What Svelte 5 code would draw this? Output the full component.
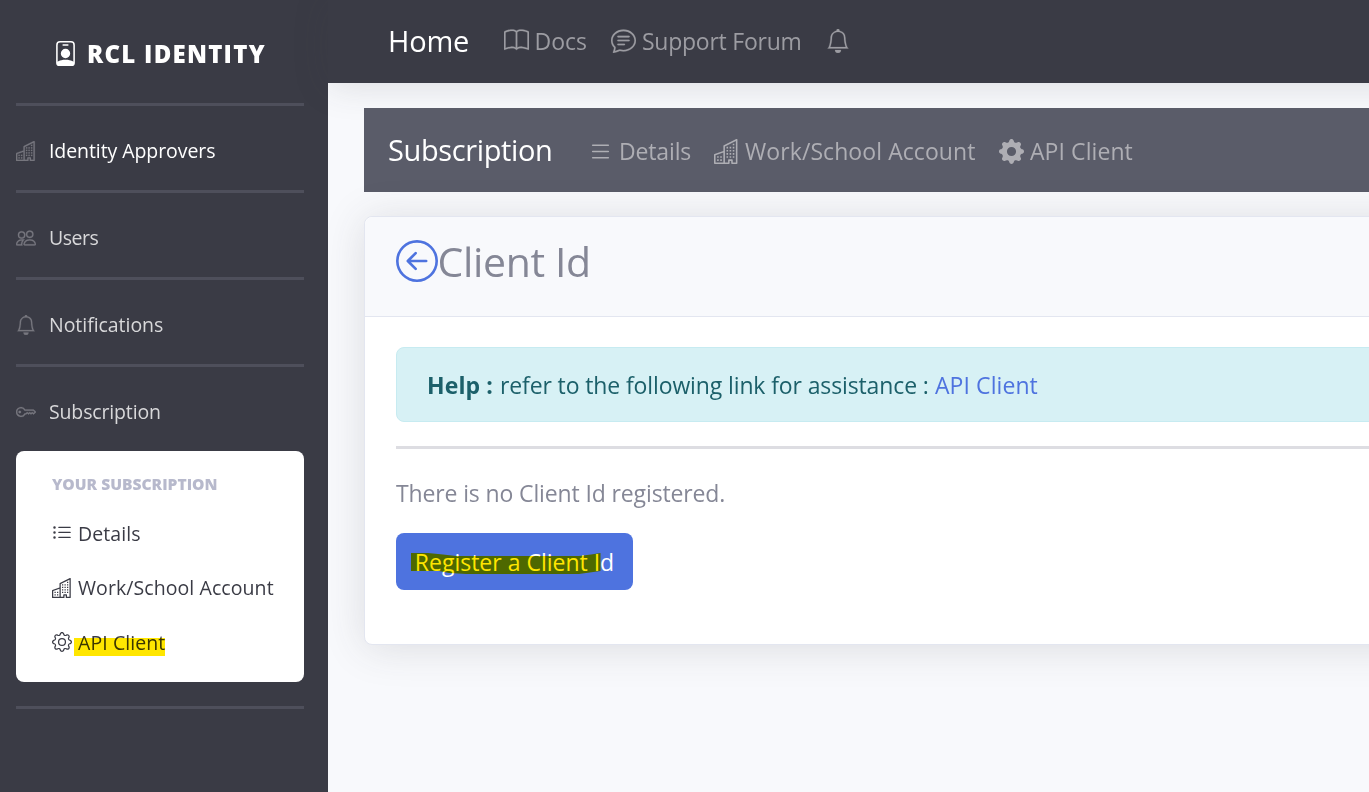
<script>
  const icons = {
    building: 'M14.763.075A.5.5 0 0 1 15 .5v15a.5.5 0 0 1-.5.5h-3a.5.5 0 0 1-.5-.5V14h-1v1.5a.5.5 0 0 1-.5.5h-9a.5.5 0 0 1-.5-.5V10a.5.5 0 0 1 .342-.474L6 7.64V4.5a.5.5 0 0 1 .276-.447l8-4a.5.5 0 0 1 .487.022zM6 8.694 1 10.36V15h5V8.694zM7 15h2v-1.5a.5.5 0 0 1 .5-.5h2a.5.5 0 0 1 .5.5V15h2V1.309l-7 3.5V15zM2 11h1v1H2v-1zm2 0h1v1H4v-1zm-2 2h1v1H2v-1zm2 0h1v1H4v-1zm4-4h1v1H8V9zm2 0h1v1h-1V9zm-2 2h1v1H8v-1zm2 0h1v1h-1v-1zm2-2h1v1h-1V9zm0 2h1v1h-1v-1zM8 7h1v1H8V7zm2 0h1v1h-1V7zm2 0h1v1h-1V7zM8 5h1v1H8V5zm2 0h1v1h-1V5zm2 0h1v1h-1V5zm0-2h1v1h-1V3z',
    bell: 'M8 16a2 2 0 0 0 2-2H6a2 2 0 0 0 2 2zM8 1.918l-.797.161A4.002 4.002 0 0 0 4 6c0 .628-.134 2.197-.459 3.742-.16.767-.376 1.566-.663 2.258h10.244c-.287-.692-.502-1.49-.663-2.258C12.134 8.197 12 6.628 12 6a4.002 4.002 0 0 0-3.203-3.92L8 1.917zM14.22 12c.223.447.481.801.78 1H1c.299-.199.557-.553.78-1C2.68 10.2 3 6.88 3 6c0-2.42 1.72-4.44 4.005-4.901a1 1 0 1 1 1.99 0A5.002 5.002 0 0 1 13 6c0 .88.32 4.2 1.22 6z',
    people: 'M15 14s1 0 1-1-1-4-5-4-5 3-5 4 1 1 1 1h8zm-7.978-1A.261.261 0 0 1 7 12.996c.001-.264.167-1.03.76-1.72C8.312 10.629 9.282 10 11 10c1.717 0 2.687.63 3.24 1.276.593.69.758 1.457.76 1.72l-.008.002a.274.274 0 0 1-.014.002H7.022zM11 7a2 2 0 1 0 0-4 2 2 0 0 0 0 4zm3-2a3 3 0 1 1-6 0 3 3 0 0 1 6 0zM6.936 9.28a5.88 5.88 0 0 0-1.23-.247A7.35 7.35 0 0 0 5 9c-4 0-5 3-5 4 0 .667.333 1 1 1h4.216A2.238 2.238 0 0 1 5 13c0-1.01.377-2.042 1.09-2.904.243-.294.526-.569.846-.816zM4.92 10A5.493 5.493 0 0 0 4 13H1c0-.26.164-1.03.76-1.724.545-.636 1.492-1.256 3.16-1.275zM1.5 5.5a3 3 0 1 1 6 0 3 3 0 0 1-6 0zm3-2a2 2 0 1 0 0 4 2 2 0 0 0 0-4z',
    key: 'M0 8a4 4 0 0 1 7.465-2H14a.5.5 0 0 1 .354.146l1.5 1.5a.5.5 0 0 1 0 .708l-1.5 1.5a.5.5 0 0 1-.708 0L13 9.207l-.646.647a.5.5 0 0 1-.708 0L11 9.207l-.646.647a.5.5 0 0 1-.708 0L9 9.207l-.646.647A.5.5 0 0 1 8 10h-.535A4 4 0 0 1 0 8zm4-3a3 3 0 1 0 2.712 4.285A.5.5 0 0 1 7.163 9h.63l.853-.854a.5.5 0 0 1 .708 0l.646.647.646-.647a.5.5 0 0 1 .708 0l.646.647.646-.647a.5.5 0 0 1 .708 0l.646.647.793-.793-1-1h-6.63a.5.5 0 0 1-.451-.285A3 3 0 0 0 4 5zM4 8a1 1 0 1 1-2 0 1 1 0 0 1 2 0z',
    listUl: 'M5 11.5a.5.5 0 0 1 .5-.5h9a.5.5 0 0 1 0 1h-9a.5.5 0 0 1-.5-.5zm0-4a.5.5 0 0 1 .5-.5h9a.5.5 0 0 1 0 1h-9a.5.5 0 0 1-.5-.5zm0-4a.5.5 0 0 1 .5-.5h9a.5.5 0 0 1 0 1h-9a.5.5 0 0 1-.5-.5zm-3 1a1 1 0 1 0 0-2 1 1 0 0 0 0 2zm0 4a1 1 0 1 0 0-2 1 1 0 0 0 0 2zm0 4a1 1 0 1 0 0-2 1 1 0 0 0 0 2z',
    list: 'M2.5 12a.5.5 0 0 1 .5-.5h10a.5.5 0 0 1 0 1H3a.5.5 0 0 1-.5-.5zm0-4a.5.5 0 0 1 .5-.5h10a.5.5 0 0 1 0 1H3a.5.5 0 0 1-.5-.5zm0-4a.5.5 0 0 1 .5-.5h10a.5.5 0 0 1 0 1H3a.5.5 0 0 1-.5-.5z',
    gear: 'M8 4.754a3.246 3.246 0 1 0 0 6.492 3.246 3.246 0 0 0 0-6.492zM5.754 8a2.246 2.246 0 1 1 4.492 0 2.246 2.246 0 0 1-4.492 0zM9.796 1.343c-.527-1.79-3.065-1.79-3.592 0l-.094.319a.873.873 0 0 1-1.255.52l-.292-.16c-1.64-.892-3.433.902-2.54 2.541l.159.292a.873.873 0 0 1-.52 1.255l-.319.094c-1.79.527-1.79 3.065 0 3.592l.319.094a.873.873 0 0 1 .52 1.255l-.16.292c-.892 1.64.901 3.434 2.541 2.54l.292-.159a.873.873 0 0 1 1.255.52l.094.319c.527 1.79 3.065 1.79 3.592 0l.094-.319a.873.873 0 0 1 1.255-.52l.292.16c1.64.893 3.434-.902 2.54-2.541l-.159-.292a.873.873 0 0 1 .52-1.255l.319-.094c1.79-.527 1.79-3.065 0-3.592l-.319-.094a.873.873 0 0 1-.52-1.255l.16-.292c.893-1.64-.902-3.433-2.541-2.54l-.292.159a.873.873 0 0 1-1.255-.52l-.094-.319zm-2.633.283c.246-.835 1.428-.835 1.674 0l.094.319a1.873 1.873 0 0 0 2.693 1.115l.291-.16c.764-.415 1.6.42 1.184 1.185l-.159.292a1.873 1.873 0 0 0 1.116 2.692l.318.094c.835.246.835 1.428 0 1.674l-.319.094a1.873 1.873 0 0 0-1.115 2.693l.16.291c.415.764-.42 1.6-1.185 1.184l-.291-.159a1.873 1.873 0 0 0-2.693 1.116l-.094.318c-.246.835-1.428.835-1.674 0l-.094-.319a1.873 1.873 0 0 0-2.692-1.115l-.292.16c-.764.415-1.6-.42-1.184-1.185l.159-.291A1.873 1.873 0 0 0 1.945 8.93l-.319-.094c-.835-.246-.835-1.428 0-1.674l.319-.094A1.873 1.873 0 0 0 3.06 4.377l-.16-.292c-.415-.764.42-1.6 1.185-1.184l.292.159a1.873 1.873 0 0 0 2.692-1.115l.094-.319z',
    gearFill: 'M9.405 1.05c-.413-1.4-2.397-1.4-2.81 0l-.1.34a1.464 1.464 0 0 1-2.105.872l-.31-.17c-1.283-.698-2.686.705-1.987 1.987l.169.311c.446.82.023 1.841-.872 2.105l-.34.1c-1.4.413-1.4 2.397 0 2.81l.34.1a1.464 1.464 0 0 1 .872 2.105l-.17.31c-.698 1.283.705 2.686 1.987 1.987l.311-.169a1.464 1.464 0 0 1 2.105.872l.1.34c.413 1.4 2.397 1.4 2.81 0l.1-.34a1.464 1.464 0 0 1 2.105-.872l.31.17c1.283.698 2.686-.705 1.987-1.987l-.169-.311a1.464 1.464 0 0 1 .872-2.105l.34-.1c1.4-.413 1.4-2.397 0-2.81l-.34-.1a1.464 1.464 0 0 1-.872-2.105l.17-.31c.698-1.283-.705-2.686-1.987-1.987l-.311.169a1.464 1.464 0 0 1-2.105-.872l-.1-.34zM8 10.93a2.929 2.929 0 1 1 0-5.86 2.929 2.929 0 0 1 0 5.858z',
    book: 'M1 2.828c.885-.37 2.154-.769 3.388-.893 1.33-.134 2.458.063 3.112.752v9.746c-.935-.53-2.12-.603-3.213-.493-1.18.12-2.37.461-3.287.811V2.828zm7.5-.141c.654-.689 1.782-.886 3.112-.752 1.234.124 2.503.523 3.388.893v9.923c-.918-.35-2.107-.692-3.287-.81-1.094-.111-2.278-.039-3.213.492V2.687zM8 1.783C7.015.936 5.587.81 4.287.94c-1.514.153-3.042.672-3.994 1.105A.5.5 0 0 0 0 2.5v11a.5.5 0 0 0 .707.455c.882-.4 2.303-.881 3.68-1.02 1.409-.142 2.59.087 3.223.877a.5.5 0 0 0 .78 0c.633-.79 1.814-1.019 3.222-.877 1.378.139 2.8.62 3.681 1.02A.5.5 0 0 0 16 13.5v-11a.5.5 0 0 0-.293-.455c-.952-.433-2.48-.952-3.994-1.105C10.413.809 8.985.936 8 1.783z',
    chat: 'M2.678 11.894a1 1 0 0 1 .287.801 10.97 10.97 0 0 1-.398 2c1.395-.323 2.247-.697 2.634-.893a1 1 0 0 1 .71-.074A8.06 8.06 0 0 0 8 14c3.996 0 7-2.807 7-6 0-3.192-3.004-6-7-6S1 4.808 1 8c0 1.468.617 2.83 1.678 3.894zm-.493 3.905a21.682 21.682 0 0 1-.713.129c-.2.032-.352-.176-.273-.362a9.68 9.68 0 0 0 .244-.637l.003-.01c.248-.72.45-1.548.524-2.319C.743 11.37 0 9.76 0 8c0-3.866 3.582-7 8-7s8 3.134 8 7-3.582 7-8 7a9.06 9.06 0 0 1-2.347-.306c-.52.263-1.639.742-3.468 1.105zM4 5.5a.5.5 0 0 1 .5-.5h7a.5.5 0 0 1 0 1h-7a.5.5 0 0 1-.5-.5zM4 8a.5.5 0 0 1 .5-.5h7a.5.5 0 0 1 0 1h-7A.5.5 0 0 1 4 8zm0 2.5a.5.5 0 0 1 .5-.5h4a.5.5 0 0 1 0 1h-4a.5.5 0 0 1-.5-.5z',
    back: 'M1 8a7 7 0 1 0 14 0A7 7 0 0 0 1 8zm15 0A8 8 0 1 1 0 8a8 8 0 0 1 16 0zm-4.5-.5a.5.5 0 0 1 0 1H5.707l2.147 2.146a.5.5 0 0 1-.708.708l-3-3a.5.5 0 0 1 0-.708l3-3a.5.5 0 1 1 .708.708L5.707 7.5H11.5z',
    badge: 'M6.5 2a.5.5 0 0 0 0 1h3a.5.5 0 0 0 0-1h-3zM11 8a3 3 0 1 1-6 0 3 3 0 0 1 6 0zM4.5 0A2.5 2.5 0 0 0 2 2.5V14a2 2 0 0 0 2 2h8a2 2 0 0 0 2-2V2.5A2.5 2.5 0 0 0 11.5 0h-7zM3 2.5A1.5 1.5 0 0 1 4.5 1h7A1.5 1.5 0 0 1 13 2.5v10.795a4.2 4.2 0 0 0-.776-.492C11.392 12.387 10.063 12 8 12s-3.392.387-4.224.803a4.2 4.2 0 0 0-.776.492V2.5z'
  };

  const sections = [
    { icon: 'building', label: 'Identity Approvers', active: true, tracking: -0.08 },
    { icon: 'people', label: 'Users', tracking: -0.5 },
    { icon: 'bell', label: 'Notifications', tracking: -0.04 },
    { icon: 'key', label: 'Subscription', tracking: -0.15 }
  ];
</script>

{#snippet icon(name, size)}
  <svg class="icon" width={size} height={size} viewBox="0 0 16 16" fill="currentColor" fill-rule="evenodd" aria-hidden="true"><path d={icons[name]} /></svg>
{/snippet}

<div class="page">
  <aside>
    <div class="brand">{@render icon('badge', 25)}<span>RCL IDENTITY</span></div>
    {#each sections as s}
      <hr />
      <a class="section" class:active={s.active}>{@render icon(s.icon, 20)}<span style:letter-spacing="{s.tracking}px">{s.label}</span></a>
    {/each}
    <div class="submenu">
      <h6>YOUR SUBSCRIPTION</h6>
      <a>{@render icon('listUl', 20)}<span>Details</span></a>
      <a>{@render icon('building', 20)}<span>Work/School Account</span></a>
      <a>{@render icon('gear', 20)}<span class="marked">API Client</span></a>
    </div>
    <hr />
  </aside>
  <div class="content">
    <nav class="top">
      <a class="title"><span>Home</span></a>
      <a class="docs">{@render icon('book', 25)}<span>Docs</span></a>
      <a class="forum">{@render icon('chat', 25)}<span>Support Forum</span></a>
      <a>{@render icon('bell', 24)}</a>
    </nav>
    <main>
      <nav class="sub">
        <a class="title"><span>Subscription</span></a>
        <a class="details">{@render icon('list', 25)}<span>Details</span></a>
        <a class="work">{@render icon('building', 25)}<span>Work/School Account</span></a>
        <a class="client">{@render icon('gearFill', 25)}<span>API Client</span></a>
      </nav>
      <section class="card">
        <header><a class="back">{@render icon('back', 42)}</a><h1>Client Id</h1></header>
        <div class="body">
          <div class="alert"><strong>Help :</strong><span>refer to the following link for assistance :</span><a>API Client</a></div>
          <hr />
          <p>There is no Client Id registered.</p>
          <button>
            <span>Register a Client Id</span>
            <svg class="marker" width="190" height="21" viewBox="0 0 190 21" aria-hidden="true"><path d="M0 0H17L32 1.5 45 3H168L180 1.5 189.500 0V18L168 21H55L38 20 28 18H0Z" fill="#ffe600" /></svg>
          </button>
        </div>
      </section>
    </main>
  </div>
</div>

<style>
  :global(body) { overflow: hidden; }
  .page { display: flex; width: 1369px; height: 792px; overflow: hidden; background: #f8f9fc; font-family: "Open Sans", "Noto Sans", sans-serif; white-space: nowrap; }
  .icon { display: block; flex: none; }
  aside { width: 288px; padding: 0 24px 0 16px; background: #3a3b45; flex: none; }
  hr { border: 0; height: 3px; margin: 0; background: #4e4f5b; }
  .brand { height: 100px; padding-top: 3px; display: flex; align-items: center; gap: 9px; padding-left: 37px; color: #fff; font-weight: 800; font-size: 24px; letter-spacing: 1.25px; }
  .section { height: 80px; padding-top: 4px; display: flex; align-items: center; gap: 13px; font-size: 19.5px; color: #d8d8da; }
  .section .icon { color: #77777f; margin-top: 1px; stroke: currentColor; stroke-width: 0.2; }
  .section.active { color: #fff; }
  .submenu { background: #fff; border-radius: 8px; height: 231px; color: #3a3b45; font-size: 19.5px; margin-bottom: 24px; }
  .submenu h6 { margin: 0; padding: 22px 0 0 36px; height: 33px; font-size: 15.6px; font-weight: 800; color: #b7b9cc; }
  .submenu a { display: flex; gap: 6px; align-items: center; padding-left: 36px; height: 54.5px; letter-spacing: 0.08px; }
  .marked { position: relative; }
  .marked::after { content: ''; position: absolute; left: -4px; right: 0; top: 9px; height: 18px; background: #ffe600; mix-blend-mode: multiply; }
  .top, .sub { display: flex; align-items: center; color: #9c9ca2; font-size: 23px; }
  .top .icon { stroke: currentColor; stroke-width: 0.12; }
  .top { height: 83px; background: #3a3b45; padding-left: 60px; box-shadow: 0 3px 36px rgba(58,59,69,.15); }
  .top a { height: 81px; margin-bottom: 2px; }
  nav a { display: flex; align-items: center; gap: 6px; margin-right: 23px; }
  nav .title { color: #fff; font-size: 29px; }
  .top .title { width: 80px; margin-right: 36px; letter-spacing: -0.2px; }
  .top .docs { width: 84px; gap: 5.5px; }
  .top .forum { width: 192px; gap: 6px; letter-spacing: -0.25px; }
  main { padding: 25px 0 0 36px; }
  .sub { height: 84px; background: #5a5c69; padding-left: 24px; color: #aeaeb4; }
  .sub a { padding-top: 2px; }
  .sub .title { width: 164px; margin-right: 36px; padding: 0 0 1px; letter-spacing: -0.38px; }
  .sub .details { width: 102.5px; letter-spacing: -0.15px; }
  .sub .work { width: 262px; gap: 6.5px; letter-spacing: 0.08px; }
  .sub .client { letter-spacing: 0.08px; gap: 6.5px; }
  .card { margin-top: 24px; width: 1100px; height: 427px; background: #fff; border: 1px solid #e3e6f0; border-radius: 8px; box-shadow: 0 3px 42px rgba(58,59,69,.15); }
  header { height: 99px; border-bottom: 1px solid #e3e6f0; background: #f8f9fc; border-radius: 8px 8px 0 0; display: flex; padding-left: 30.5px; color: #858796; }
  .back { color: #4e73df; padding-top: 23px; }
  h1 { margin: 16px 0 0; font-size: 41px; font-weight: 400; line-height: 56px; letter-spacing: -0.35px; }
  .body { padding: 30px 30px 30px 31px; }
  .alert { height: 73px; border: 1px solid #c7ebf1; border-radius: 8px; background: #d7f1f5; color: #1c606a; display: flex; align-items: center; padding-left: 30px; font-size: 23px; letter-spacing: -0.12px; }
  .alert strong { width: 73px; letter-spacing: 0.1px; }
  .alert span { width: 435px; }
  .alert a { color: #4e73df; letter-spacing: 0.08px; }
  .body hr { margin-top: 24px; background: #dddde2; }
  p { margin: 26px 0 22px; line-height: 36px; font-size: 23px; color: #858796; letter-spacing: -0.13px; }
  button { position: relative; display: block; width: 237px; height: 57px; padding: 1px 0 0; border: 0; border-radius: 8px; background: #4e73df; color: #fff; font: 23px "Open Sans", sans-serif; }
  .marker { position: absolute; left: 15px; top: 20px; mix-blend-mode: multiply; }
</style>
